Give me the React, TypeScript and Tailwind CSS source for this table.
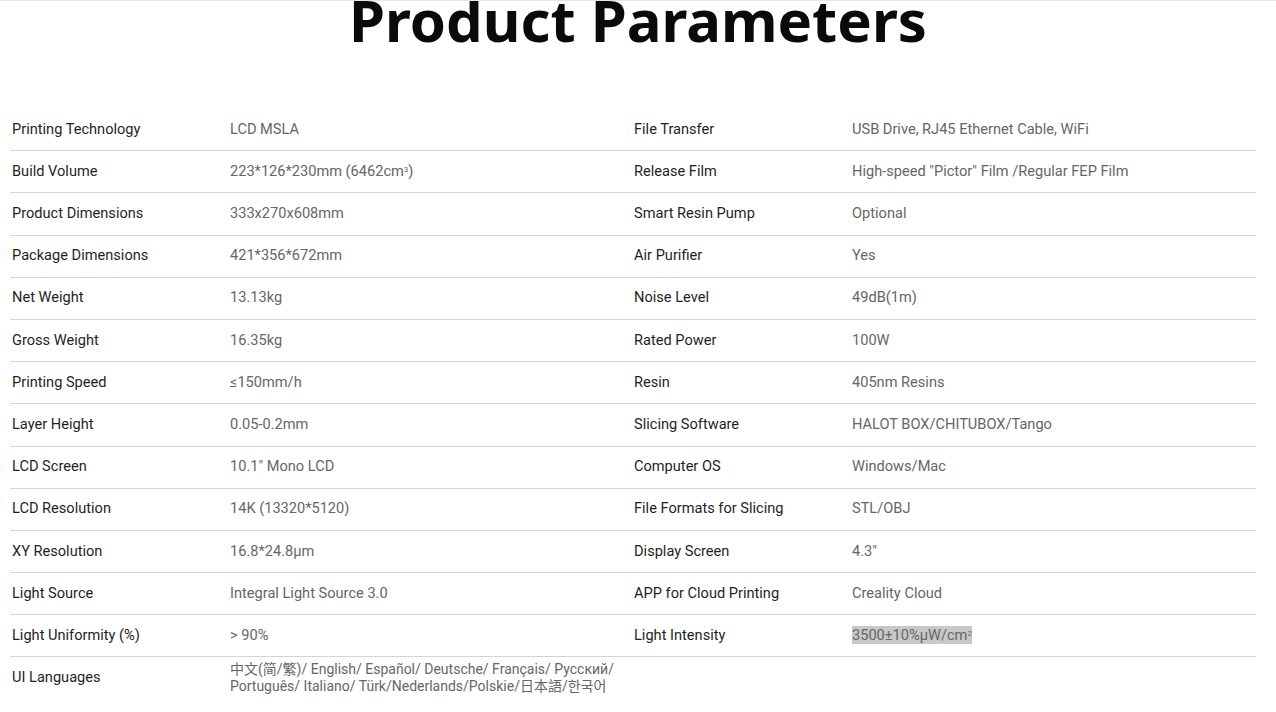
const rows: [string, React.ReactNode, string, React.ReactNode][] = [
  ["Printing Technology", "LCD MSLA", "File Transfer", "USB Drive, RJ45 Ethernet Cable, WiFi"],
  ["Build Volume", <>223*126*230mm (6462cm<sup className="text-[8px]">3</sup>)</>, "Release Film", 'High-speed "Pictor" Film /Regular FEP Film'],
  ["Product Dimensions", "333x270x608mm", "Smart Resin Pump", "Optional"],
  ["Package Dimensions", "421*356*672mm", "Air Purifier", "Yes"],
  ["Net Weight", "13.13kg", "Noise Level", "49dB(1m)"],
  ["Gross Weight", "16.35kg", "Rated Power", "100W"],
  ["Printing Speed", "≤150mm/h", "Resin", "405nm Resins"],
  ["Layer Height", "0.05-0.2mm", "Slicing Software", "HALOT BOX/CHITUBOX/Tango"],
  ["LCD Screen", '10.1" Mono LCD', "Computer OS", "Windows/Mac"],
  ["LCD Resolution", "14K (13320*5120)", "File Formats for Slicing", "STL/OBJ"],
  ["XY Resolution", "16.8*24.8µm", "Display Screen", '4.3"'],
  ["Light Source", "Integral Light Source 3.0", "APP for Cloud Printing", "Creality Cloud"],
  [
    "Light Uniformity (%)",
    "> 90%",
    "Light Intensity",
    <span className="bg-[#c8c8c8]">
      3500±10%µW/cm<sup className="text-[8px]">2</sup>
    </span>,
  ],
]

function Cell({ label, value }: { label: string; value: React.ReactNode }) {
  return (
    <div className="flex w-[622px] shrink-0 items-center pl-[2px]">
      <div className="w-[218px] shrink-0 text-[#1f1f1f]">{label}</div>
      <div className="text-[#666666]">{value}</div>
    </div>
  )
}

export default function App() {
  return (
    <div
      className="min-h-[712px] w-full overflow-hidden bg-white border-t border-[#e6e6e6]"
      style={{ fontFamily: "Roboto, 'Noto Sans CJK SC', sans-serif" }}
    >
      <h1
        className="mt-[-20px] text-center text-[58px] font-bold leading-[78px] text-[#0a0a0a]"
        style={{ fontFamily: "'Noto Sans', sans-serif" }}
      >
        Product Parameters
      </h1>

      <div className="ml-[10px] mr-[20px] mt-[50px] text-[14.6px]">
        {rows.map(([l1, v1, l2, v2]) => (
          <div key={l1} className="box-border flex h-[42.2px] border-b border-[#d4d4d4]">
            <Cell label={l1} value={v1} />
            <Cell label={l2} value={v2} />
          </div>
        ))}
        <div className="flex h-[42px]">
          <div className="flex w-[622px] shrink-0 items-center pl-[2px]">
            <div className="w-[218px] shrink-0 text-[#1f1f1f]">UI Languages</div>
            <div className="whitespace-nowrap text-[14px] leading-[17px] text-[#666666]">
              中文(简/繁)/ English/ Español/ Deutsche/ Français/ Русский/
              <br />
              Português/ Italiano/ Türk/Nederlands/Polskie/日本語/한국어
            </div>
          </div>
        </div>
      </div>
    </div>
  )
}
